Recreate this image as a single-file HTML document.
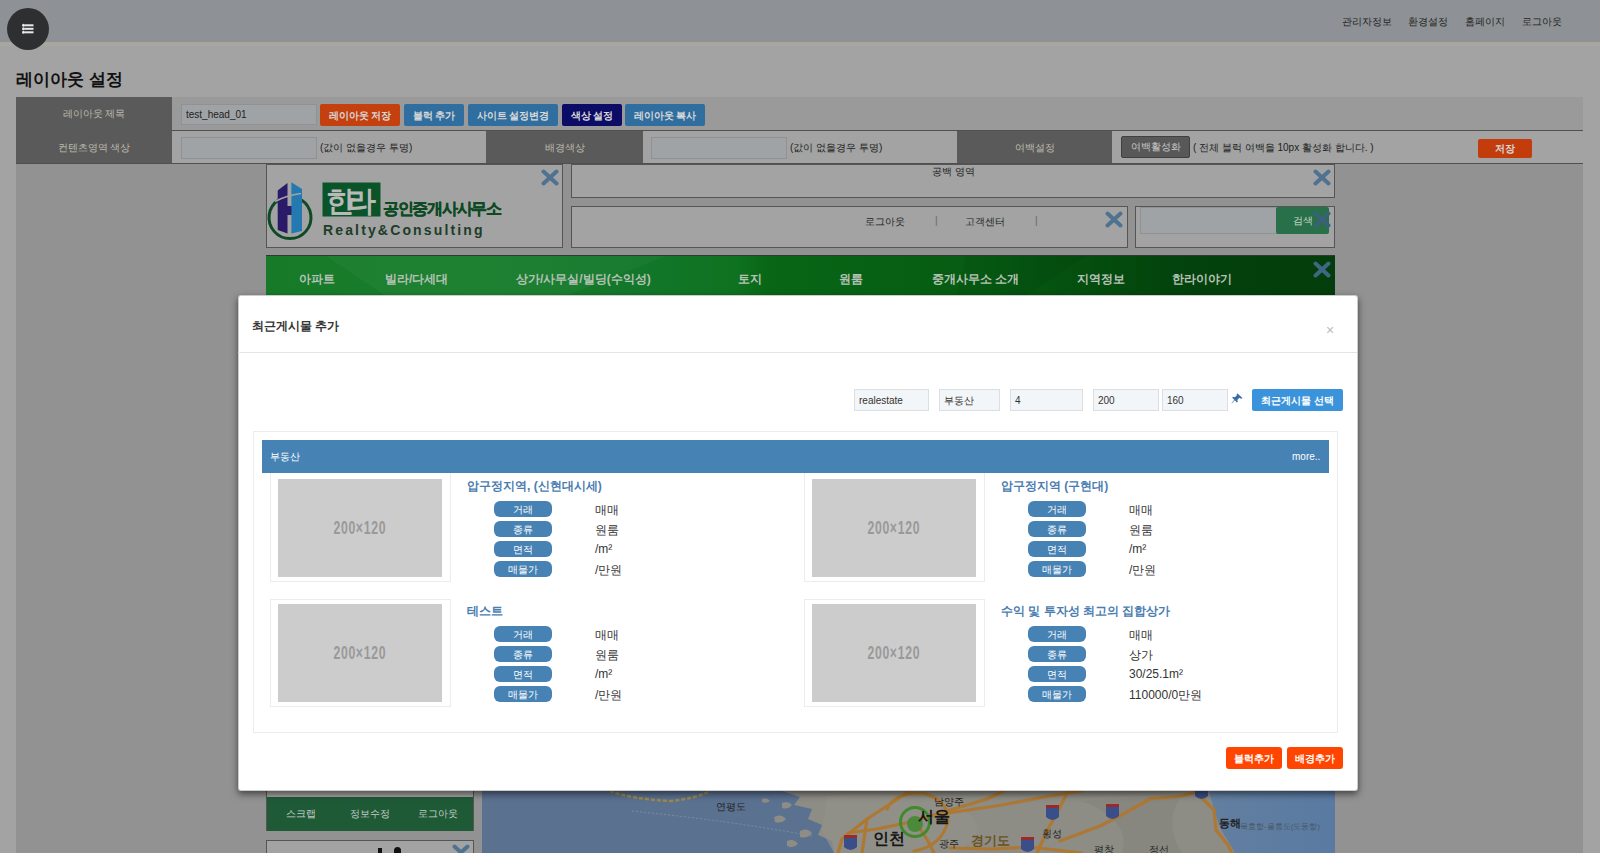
<!DOCTYPE html>
<html><head><meta charset="utf-8">
<style>
*{box-sizing:border-box;margin:0;padding:0}
html,body{width:1600px;height:853px;overflow:hidden}
body{position:relative;background:#a3a3a3;font-family:"Liberation Sans",sans-serif;font-size:10px;color:#222}
.a{position:absolute}
.topbar{left:0;top:0;width:1600px;height:42px;background:#8e9296}
.circle{left:7px;top:8px;width:42px;height:42px;border-radius:50%;background:#2e2f31}
.topnav{top:15px;font-size:10px;color:#1e1f20;white-space:nowrap}
.title{left:16px;top:68px;font-size:17px;font-weight:bold;color:#111;white-space:nowrap}
.lbl{background:#5a5a5a;color:#bdbaae;text-align:center;line-height:33px;font-size:10px}
.hline{height:1px;background:#505050}
.inp{background:#a0a3a5;border:1px solid #8c9295;height:21px;font-size:10px;line-height:19px;padding-left:4px;color:#222}
.btn{height:22px;line-height:23px;color:#d8d8d8;font-weight:bold;text-align:center;font-size:10px;border-radius:2px;white-space:nowrap}
.txt{white-space:nowrap;font-size:10px;color:#222}
.box{border:1px solid #555;background:#a3a3a3}
.xi{width:17px;height:17px}
.nav{color:#b6c2b6;font-weight:bold;font-size:12px;white-space:nowrap;top:271px}
.minp{height:22px;background:#f3f6f8;border:1px solid #d9dfe3;font-size:10px;line-height:22px;padding-left:4px;color:#333;white-space:nowrap}
.ph{width:164px;height:98px;background:#cccccc;color:#999;font-size:18px;text-align:center;line-height:98px;font-weight:bold;letter-spacing:1px}
.ph span{display:inline-block;transform:scaleX(.68)}
.ttl{color:#4a7db0;font-size:12px;font-weight:bold;white-space:nowrap}
.pill{width:58px;height:16px;border-radius:6px;background:#4682b4;color:#fff;font-size:10px;line-height:18px;text-align:center;white-space:nowrap}
.val{color:#333;font-size:12px;white-space:nowrap}
</style></head><body>

<!-- top bar -->
<div class="a topbar"></div>
<div class="a" style="left:0;top:42px;width:1600px;height:4px;background:#a8a69f"></div>
<div class="a circle"><svg width="42" height="42" viewBox="0 0 42 42"><g fill="#e8e8e8"><circle cx="16.5" cy="17.3" r="1.5"/><circle cx="16.5" cy="20.8" r="1.5"/><circle cx="16.5" cy="24.3" r="1.5"/><rect x="18" y="16.3" width="8.5" height="2"/><rect x="18" y="19.8" width="8.5" height="2"/><rect x="18" y="23.3" width="8.5" height="2"/></g></svg></div>
<div class="a topnav" style="left:1342px">관리자정보</div>
<div class="a topnav" style="left:1408px">환경설정</div>
<div class="a topnav" style="left:1465px">홈페이지</div>
<div class="a topnav" style="left:1522px">로그아웃</div>

<div class="a title">레이아웃 설정</div>

<!-- settings table -->
<div class="a" style="left:172px;top:97px;width:1411px;height:33px;background:#9a9a9a"></div>
<div class="a lbl" style="left:16px;top:97px;width:156px;height:34px">레이아웃 제목</div>
<div class="a lbl" style="left:16px;top:131px;width:156px;height:33px">컨텐츠영역 색상</div>
<div class="a hline" style="left:172px;top:130px;width:1411px"></div>
<div class="a hline" style="left:16px;top:163px;width:1567px"></div>
<div class="a inp" style="left:181px;top:104px;width:136px">test_head_01</div>
<div class="a btn" style="left:320px;top:104px;width:80px;background:#c4400f">레이아웃 저장</div>
<div class="a btn" style="left:404px;top:104px;width:60px;background:#2f6e9e">블럭 추가</div>
<div class="a btn" style="left:468px;top:104px;width:90px;background:#2f6e9e">사이트 설정변경</div>
<div class="a btn" style="left:562px;top:104px;width:60px;background:#0c0b66">색상 설정</div>
<div class="a btn" style="left:625px;top:104px;width:80px;background:#2f6e9e">레이아웃 복사</div>

<div class="a inp" style="left:181px;top:137px;width:136px;height:22px"></div>
<div class="a txt" style="left:320px;top:141px">(값이 없을경우 투명)</div>
<div class="a lbl" style="left:486px;top:131px;width:157px;height:32px">배경색상</div>
<div class="a inp" style="left:651px;top:137px;width:136px;height:22px"></div>
<div class="a txt" style="left:790px;top:141px">(값이 없을경우 투명)</div>
<div class="a lbl" style="left:957px;top:131px;width:155px;height:32px">여백설정</div>
<div class="a btn" style="left:1121px;top:136px;width:69px;height:22px;background:#585858;border:1px solid #404040;color:#c8c8c8;font-weight:normal;line-height:20px">여백활성화</div>
<div class="a txt" style="left:1193px;top:141px">( 전체 블럭 여백을 10px 활성화 합니다. )</div>
<div class="a btn" style="left:1478px;top:139px;width:54px;height:19px;line-height:19px;background:#c23c0c">저장</div>

<!-- content container -->
<div class="a" style="left:16px;top:164px;width:1567px;height:689px;background:#929292"></div>

<!-- header preview -->
<div class="a box" style="left:266px;top:164px;width:297px;height:84px"></div>
<div class="a box" style="left:571px;top:164px;width:764px;height:34px"></div>
<div class="a txt" style="left:932px;top:165px;color:#222">공백 영역</div>
<div class="a box" style="left:571px;top:206px;width:557px;height:42px"></div>
<div class="a txt" style="left:865px;top:215px">로그아웃</div>
<div class="a txt" style="left:935px;top:215px;color:#666">|</div>
<div class="a txt" style="left:965px;top:215px">고객센터</div>
<div class="a txt" style="left:1035px;top:215px;color:#666">|</div>
<div class="a box" style="left:1135px;top:206px;width:200px;height:42px"></div>
<div class="a inp" style="left:1140px;top:207px;width:137px;height:27px"></div>
<div class="a btn" style="left:1276px;top:207px;width:53px;height:27px;line-height:27px;background:#28704a;font-weight:normal;color:#c8d8c8">검색</div>

<svg class="a" style="left:266px;top:178px" width="245" height="66" viewBox="0 0 245 66">
<path d="M12.5 22 A21 21 0 1 0 35.5 22" fill="none" stroke="#0f4a26" stroke-width="3"/>
<path d="M11.7 12.4 L21.5 5 L21.5 55.6 L11.7 52 Z" fill="#2a1b68"/>
<rect x="21" y="28" width="5" height="9" fill="#2a1b68"/>
<path d="M25.4 4.3 L36 11 L36 53 L25.4 55.6 Z" fill="#2379b0"/>
<path d="M9 23.5 Q20 17.5 35 15.5" stroke="#a3a3a3" stroke-width="1.6" fill="none"/>
<rect x="56.5" y="4.5" width="58" height="34" fill="#0b542a"/>
<text x="60" y="33" font-size="29" font-weight="bold" fill="#b9b9b9" font-family="Liberation Sans,sans-serif" textLength="50">한라</text>
<text x="117" y="36" font-size="16" font-weight="bold" fill="#0d4a24" stroke="#0d4a24" stroke-width=".4" font-family="Liberation Sans,sans-serif" textLength="119">공인중개사사무소</text>
<text x="57" y="57" font-size="14" font-weight="bold" fill="#1d3d2a" font-family="Liberation Sans,sans-serif" textLength="162" letter-spacing="2.5">Realty&amp;Consulting</text>
</svg>
<svg class="a" style="left:541px;top:169px" width="18" height="17" viewBox="0 0 18 17"><path d="M2.5 2.5 L15.5 14.5 M15.5 2.5 L2.5 14.5" stroke="#4f7291" stroke-width="4" stroke-linecap="round"/></svg>
<svg class="a" style="left:1313px;top:169px" width="18" height="17" viewBox="0 0 18 17"><path d="M2.5 2.5 L15.5 14.5 M15.5 2.5 L2.5 14.5" stroke="#4f7291" stroke-width="4" stroke-linecap="round"/></svg>
<svg class="a" style="left:1105px;top:211px" width="18" height="17" viewBox="0 0 18 17"><path d="M2.5 2.5 L15.5 14.5 M15.5 2.5 L2.5 14.5" stroke="#4f7291" stroke-width="4" stroke-linecap="round"/></svg>
<svg class="a" style="left:1313px;top:211px" width="18" height="17" viewBox="0 0 18 17"><path d="M2.5 2.5 L15.5 14.5 M15.5 2.5 L2.5 14.5" stroke="#3a6179" stroke-width="4" stroke-linecap="round"/></svg>
<!-- green nav -->
<div class="a" style="left:266px;top:255px;border-top:1px solid #2f3a30;width:1069px;height:41px;background:linear-gradient(90deg,#177a29 0%,#177d2c 20%,#12772a 35%,#0e7220 44%,#086616 47%,#065b12 68%,#044c0e 78%,#03420c 86%,#033d0b 100%)"></div>
<svg class="a" style="left:266px;top:256px" width="1069" height="40"><path d="M60 0 L400 0 L300 40 L120 40 Z" fill="#ffffff" opacity=".03"/><path d="M700 0 L820 0 L760 40 L690 40 Z" fill="#000" opacity=".05"/></svg>
<div class="a nav" style="left:299px">아파트</div>
<div class="a nav" style="left:385px">빌라/다세대</div>
<div class="a nav" style="left:516px">상가/사무실/빌딩(수익성)</div>
<div class="a nav" style="left:738px">토지</div>
<div class="a nav" style="left:839px">원룸</div>
<div class="a nav" style="left:932px">중개사무소 소개</div>
<div class="a nav" style="left:1077px">지역정보</div>
<div class="a nav" style="left:1172px">한라이야기</div>

<!-- sidebar bottom -->
<div class="a" style="left:266px;top:760px;width:208px;height:71px;border:1px solid #555;border-top:none;border-bottom:none;background:#a3a3a3"></div>
<div class="a" style="left:267px;top:797px;width:206px;height:34px;background:#1f5a37"></div>
<div class="a" style="left:286px;top:807px;color:#c4ccc6;font-size:10px;white-space:nowrap">스크랩</div>
<div class="a" style="left:350px;top:807px;color:#c4ccc6;font-size:10px;white-space:nowrap">정보수정</div>
<div class="a" style="left:418px;top:807px;color:#c4ccc6;font-size:10px;white-space:nowrap">로그아웃</div>
<div class="a" style="left:266px;top:840px;width:208px;height:20px;border:1px solid #555;background:#a3a3a3"></div>
<div class="a" style="left:378px;top:848px;width:4px;height:6px;background:#111"></div>
<div class="a" style="left:394px;top:847px;width:7px;height:7px;border-radius:6px 6px 0 0;background:#111"></div>
<svg class="a" style="left:452px;top:844px" width="18" height="17" viewBox="0 0 18 17"><path d="M2.5 2.5 L15.5 14.5 M15.5 2.5 L2.5 14.5" stroke="#4f7291" stroke-width="4" stroke-linecap="round"/></svg>
<!-- map -->
<svg class="a" style="left:482px;top:791px" width="853" height="62" viewBox="0 0 853 62">
<defs><linearGradient id="sea2" x1="0" x2="1" y1="0" y2="0"><stop offset="0" stop-color="#64809f"/><stop offset="1" stop-color="#5a7aa2"/></linearGradient></defs>
<rect width="853" height="62" fill="#5a7190"/>
<rect x="700" y="0" width="153" height="62" fill="url(#sea2)"/>
<path d="M128 0 Q150 8 188 10 Q212 8 228 0" stroke="#9c8a4a" stroke-width="2.5" fill="none" stroke-dasharray="4 2"/>
<path d="M150 20 Q250 30 330 45" stroke="#7d8ea5" stroke-width="1" fill="none" stroke-dasharray="2 2"/>
<path d="M300 0 L318 6 L312 14 L330 18 L326 28 L340 34 L336 44 L350 50 L352 62 L753 62 L746 50 L739 39 L733 22 L727 0 Z" fill="#8d8c85"/>
<path d="M300 12 Q306 9 310 14 Q306 19 300 17 Z M292 26 Q299 22 304 28 Q300 33 293 31 Z M318 40 Q325 36 330 42 Q326 48 318 46 Z M305 50 Q312 47 316 53 Q311 58 305 55 Z M280 8 Q285 6 288 10 Q284 13 280 11 Z" fill="#8d8c85"/>
<path d="M345 5 Q400 0 470 10 Q520 40 470 62 L352 62 L340 40 Z" fill="#939189" opacity=".7"/>
<path d="M600 10 Q650 30 640 62 L700 62 Q680 30 700 5 Z" fill="#85847c" opacity=".6"/>
<g stroke="#ad7833" stroke-width="3.2" fill="none" stroke-linecap="round" stroke-linejoin="round">
<path d="M356 62 L360 48 L385 28 L405 15 L420 5 L428 0"/>
<path d="M366 42 L395 38 L433 30 L465 20 L505 8 L522 0"/>
<path d="M405 18 Q412 2 440 2 Q466 8 466 30 Q460 55 432 60"/>
<path d="M433 30 L446 50 L452 62"/>
<path d="M468 57 L510 58 L548 56 L600 62"/>
<path d="M555 62 L565 40 L576 20 L586 0"/>
<path d="M578 50 L618 35 L643 22 L668 8 L700 5 L718 0"/>
<path d="M719 6 L732 19 L734 39 L746 54 L750 62"/>
<path d="M466 22 L520 14 L562 6 L600 0"/>
<path d="M385 28 L380 62"/>
</g>
<circle cx="433" cy="31" r="14.5" fill="none" stroke="#3f8a2a" stroke-width="3"/>
<circle cx="433" cy="33" r="8" fill="#4b8a3a"/>
<g fill="#161616" font-family="Liberation Sans,sans-serif" font-weight="bold">
<text x="391" y="53" font-size="16">인천</text>
<text x="436" y="31" font-size="16">서울</text>
<text x="489" y="54" font-size="13" fill="#6a5222">경기도</text>
<text x="234" y="19" font-size="10" font-weight="normal" fill="#222">연평도</text>
<text x="737" y="36" font-size="11" fill="#222">동해</text>
<text x="758" y="38" font-size="8" font-weight="normal" fill="#48586a">묵호항-울릉도(도동항)</text>
<text x="560" y="46" font-size="10" font-weight="normal" fill="#222">횡성</text>
<text x="457" y="56" font-size="10" font-weight="normal" fill="#222">광주</text>
<text x="452" y="14" font-size="10" font-weight="normal" fill="#222">남양주</text>
<text x="612" y="62" font-size="10" font-weight="normal" fill="#222">평창</text>
<text x="667" y="62" font-size="10" font-weight="normal" fill="#222">정선</text>
</g>
<g>
<path d="M362 47 h13 v9 q-6.5 6 -13 0 z" fill="#3a4f8a"/><rect x="362" y="44" width="13" height="3" fill="#9a2a2a"/>
<path d="M564 17 h13 v9 q-6.5 6 -13 0 z" fill="#3a4f8a"/><rect x="564" y="14" width="13" height="3" fill="#9a2a2a"/>
<path d="M539 49 h13 v9 q-6.5 6 -13 0 z" fill="#3a4f8a"/><rect x="539" y="46" width="13" height="3" fill="#9a2a2a"/>
<path d="M624 16 h13 v9 q-6.5 6 -13 0 z" fill="#3a4f8a"/><rect x="624" y="13" width="13" height="3" fill="#9a2a2a"/>
<path d="M713 0 h13 v5 q-6.5 6 -13 0 z" fill="#3a4f8a"/>
</g>
</svg>
<svg class="a" style="left:1313px;top:261px" width="18" height="17" viewBox="0 0 18 17"><path d="M2.5 2.5 L15.5 14.5 M15.5 2.5 L2.5 14.5" stroke="#3f6784" stroke-width="4" stroke-linecap="round"/></svg>
<!-- modal -->
<div class="a" style="left:238px;top:295px;width:1120px;height:496px;background:#fff;border-radius:3px;border:1px solid rgba(0,0,0,.2);box-shadow:0 3px 7px rgba(0,0,0,.55)"></div>
<div class="a" style="left:252px;top:318px;font-size:12px;font-weight:bold;color:#333;white-space:nowrap">최근게시물 추가</div>
<div class="a" style="left:1326px;top:322px;font-size:14px;color:#bbb">&#215;</div>
<div class="a" style="left:238px;top:352px;width:1119px;height:1px;background:#e5e5e5"></div>

<div class="a minp" style="left:854px;top:389px;width:75px">realestate</div>
<div class="a minp" style="left:939px;top:389px;width:61px">부동산</div>
<div class="a minp" style="left:1010px;top:389px;width:73px">4</div>
<div class="a minp" style="left:1093px;top:389px;width:66px">200</div>
<div class="a minp" style="left:1162px;top:389px;width:66px">160</div>
<svg class="a" style="left:1231px;top:393px" width="12" height="11" viewBox="0 0 12 11"><path d="M6.5 0.5 L11.5 5 L10 5.8 L8.5 4.8 L6.3 7 L6.8 8.8 L5.8 9.6 L3.8 7.2 L0.8 10.5 L0.5 10.2 L3.3 6.8 L1.2 4.8 L2 3.8 L3.8 4.3 L6 2.2 L5.5 1.2 Z" fill="#3a6da3"/></svg>
<div class="a btn" style="left:1252px;top:389px;width:91px;height:22px;line-height:24px;background:#3b94db;color:#fff;border-radius:2px">최근게시물 선택</div>

<div class="a" style="left:253px;top:431px;width:1085px;height:302px;border:1px solid #ececec"></div>
<div class="a" style="left:262px;top:440px;width:1067px;height:33px;background:#4682b4"></div>
<div class="a" style="left:270px;top:450px;color:#fff;font-size:10px;white-space:nowrap">부동산</div>
<div class="a" style="left:1292px;top:451px;color:#fff;font-size:10px;white-space:nowrap">more..</div>
<div class="a" style="left:270px;top:473px;width:181px;height:109px;border:1px solid #ececec;border-top:none"></div>
<div class="a ph" style="left:278px;top:479px"><span>200×120</span></div>
<div class="a ttl" style="left:467px;top:478px">압구정지역, (신현대시세)</div>
<div class="a pill" style="left:494px;top:501px">거래</div>
<div class="a val" style="left:595px;top:502px">매매</div>
<div class="a pill" style="left:494px;top:521px">종류</div>
<div class="a val" style="left:595px;top:522px">원룸</div>
<div class="a pill" style="left:494px;top:541px">면적</div>
<div class="a val" style="left:595px;top:542px">/m²</div>
<div class="a pill" style="left:494px;top:561px">매물가</div>
<div class="a val" style="left:595px;top:562px">/만원</div>
<div class="a" style="left:804px;top:473px;width:181px;height:109px;border:1px solid #ececec;border-top:none"></div>
<div class="a ph" style="left:812px;top:479px"><span>200×120</span></div>
<div class="a ttl" style="left:1001px;top:478px">압구정지역 (구현대)</div>
<div class="a pill" style="left:1028px;top:501px">거래</div>
<div class="a val" style="left:1129px;top:502px">매매</div>
<div class="a pill" style="left:1028px;top:521px">종류</div>
<div class="a val" style="left:1129px;top:522px">원룸</div>
<div class="a pill" style="left:1028px;top:541px">면적</div>
<div class="a val" style="left:1129px;top:542px">/m²</div>
<div class="a pill" style="left:1028px;top:561px">매물가</div>
<div class="a val" style="left:1129px;top:562px">/만원</div>
<div class="a" style="left:270px;top:599px;width:181px;height:108px;border:1px solid #ececec"></div>
<div class="a ph" style="left:278px;top:604px"><span>200×120</span></div>
<div class="a ttl" style="left:467px;top:603px">테스트</div>
<div class="a pill" style="left:494px;top:626px">거래</div>
<div class="a val" style="left:595px;top:627px">매매</div>
<div class="a pill" style="left:494px;top:646px">종류</div>
<div class="a val" style="left:595px;top:647px">원룸</div>
<div class="a pill" style="left:494px;top:666px">면적</div>
<div class="a val" style="left:595px;top:667px">/m²</div>
<div class="a pill" style="left:494px;top:686px">매물가</div>
<div class="a val" style="left:595px;top:687px">/만원</div>
<div class="a" style="left:804px;top:599px;width:181px;height:108px;border:1px solid #ececec"></div>
<div class="a ph" style="left:812px;top:604px"><span>200×120</span></div>
<div class="a ttl" style="left:1001px;top:603px">수익 및 투자성 최고의 집합상가</div>
<div class="a pill" style="left:1028px;top:626px">거래</div>
<div class="a val" style="left:1129px;top:627px">매매</div>
<div class="a pill" style="left:1028px;top:646px">종류</div>
<div class="a val" style="left:1129px;top:647px">상가</div>
<div class="a pill" style="left:1028px;top:666px">면적</div>
<div class="a val" style="left:1129px;top:667px">30/25.1m²</div>
<div class="a pill" style="left:1028px;top:686px">매물가</div>
<div class="a val" style="left:1129px;top:687px">110000/0만원</div>

<div class="a btn" style="left:1226px;top:747px;width:56px;height:22px;line-height:24px;background:#ff4500;color:#fff;border-radius:3px">블럭추가</div>
<div class="a btn" style="left:1287px;top:747px;width:56px;height:22px;line-height:24px;background:#ff4500;color:#fff;border-radius:3px">배경추가</div>
</body></html>
